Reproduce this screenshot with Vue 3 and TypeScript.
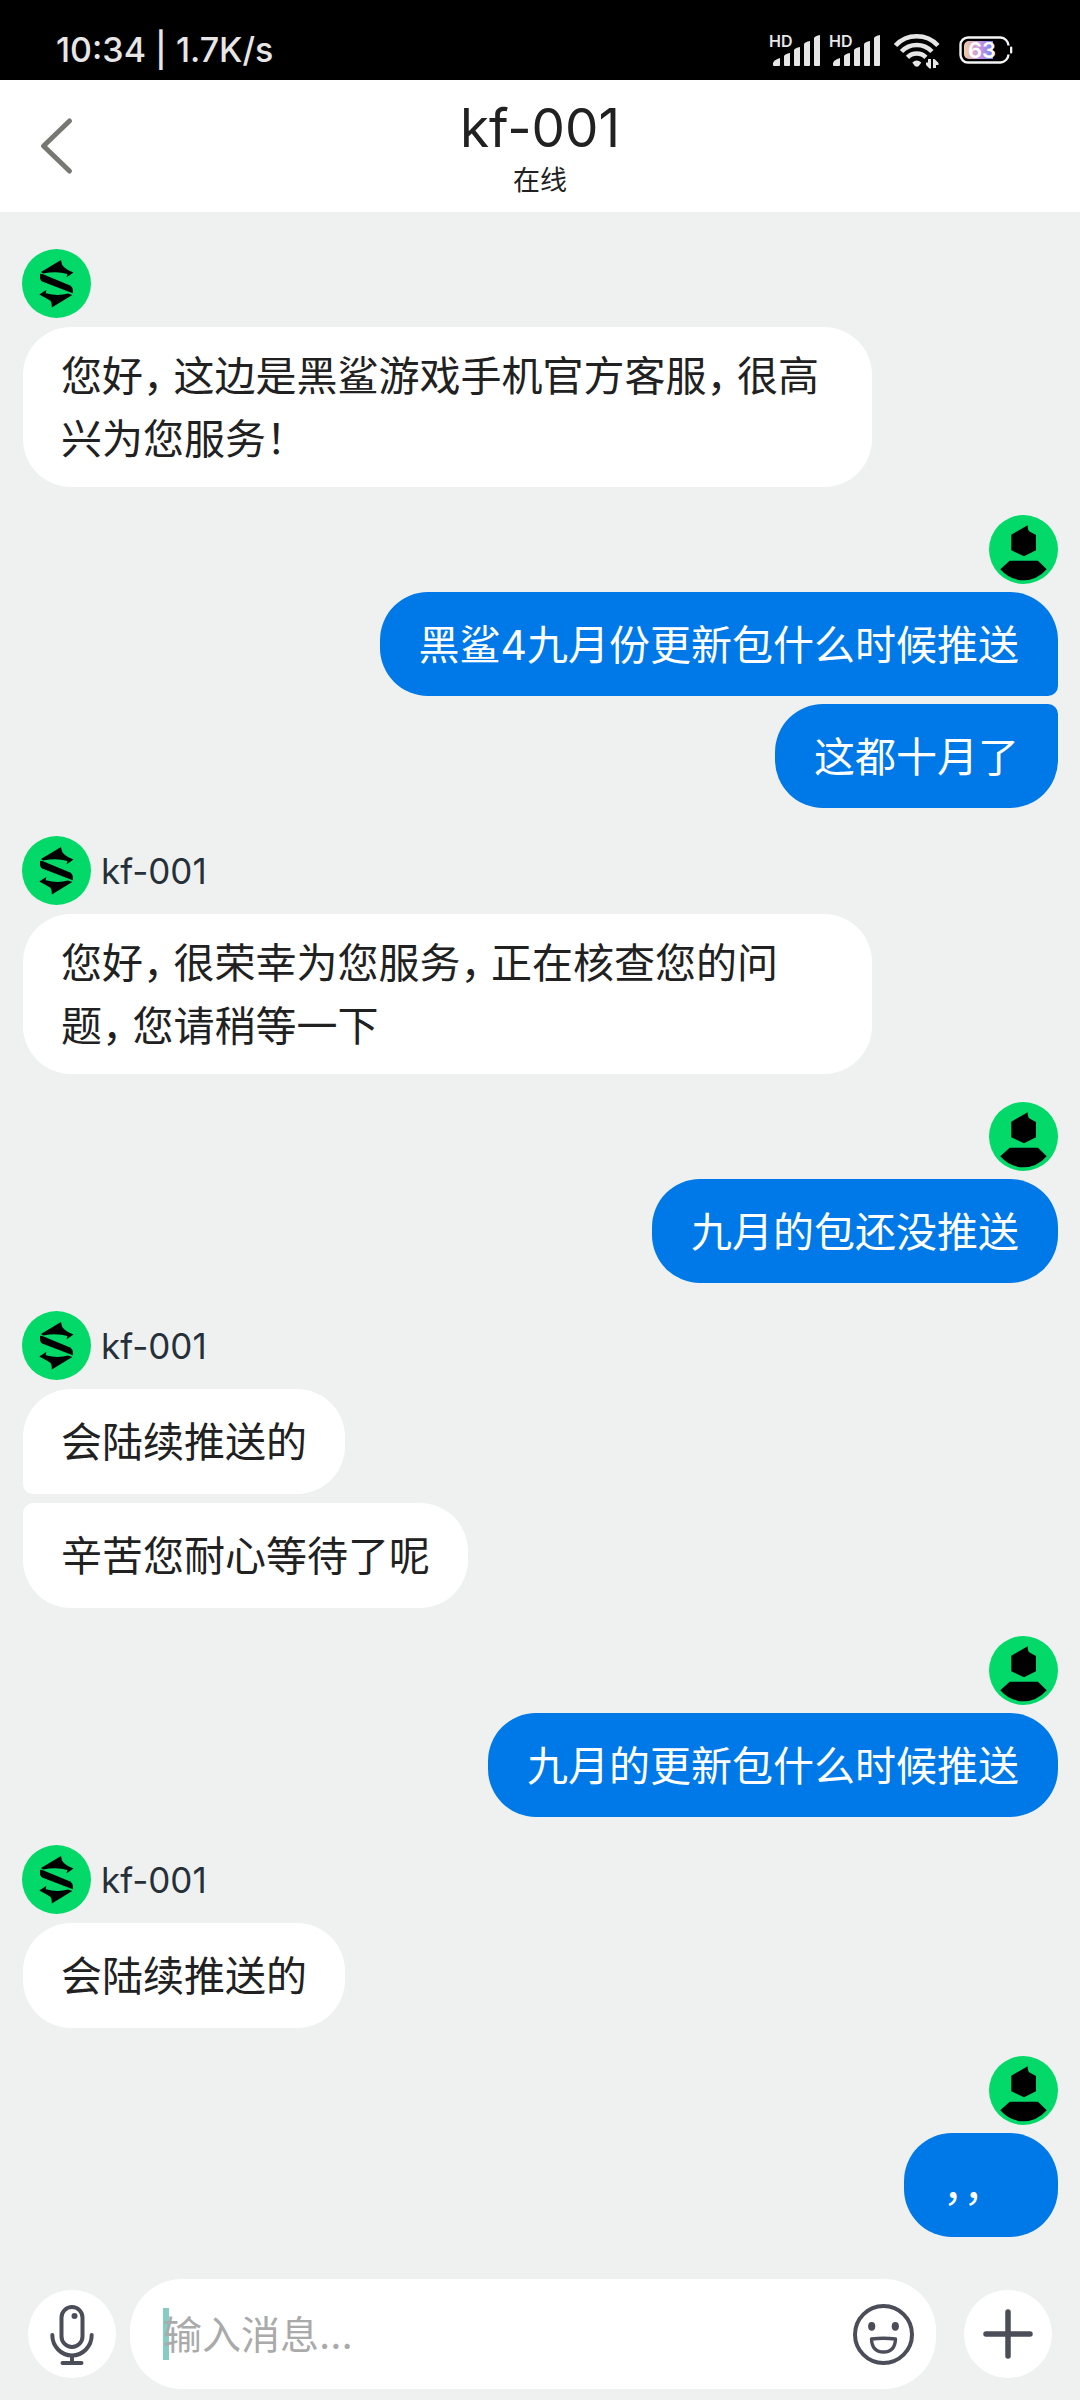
<script setup lang="ts">
import { ref } from 'vue'

interface Group {
  id: number
  from: 'agent' | 'me'
  name?: string
  messages: string[][]
}

const draft = ref('')

// Each message is a list of lines.
const groups: Group[] = [
  { id: 1, from: 'agent', messages: [['您好，这边是黑鲨游戏手机官方客服，很高', '兴为您服务！']] },
  { id: 2, from: 'me', messages: [['黑鲨4九月份更新包什么时候推送'], ['这都十月了']] },
  { id: 3, from: 'agent', name: 'kf-001', messages: [['您好，很荣幸为您服务，正在核查您的问', '题，您请稍等一下']] },
  { id: 4, from: 'me', messages: [['九月的包还没推送']] },
  { id: 5, from: 'agent', name: 'kf-001', messages: [['会陆续推送的'], ['辛苦您耐心等待了呢']] },
  { id: 6, from: 'me', messages: [['九月的更新包什么时候推送']] },
  { id: 7, from: 'agent', name: 'kf-001', messages: [['会陆续推送的']] },
  { id: 8, from: 'me', messages: [['，，']] },
]

// Splits a line so that each comma can be set half-width.
const parts = (line: string): string[] => line.split(/(，)/).filter((p) => p !== '')
</script>

<template>
  <div class="app">
    <div class="status">
      <span class="status-text">10:34 | 1.7K/s</span>
      <div class="status-icons">
        <svg v-for="n in 2" :key="n" class="signal" width="50" height="34" viewBox="0 0 50 34" aria-hidden="true">
          <text class="hd" x="-2" y="14">HD</text>
          <g fill="#e6e6e6">
            <path d="M2 30q1-3 7-5v7a1 1 0 0 1-1 1H3a1 1 0 0 1-1-1z" />
            <path d="M13 23q1-2 6-3v12a1 1 0 0 1-1 1h-4a1 1 0 0 1-1-1z" />
            <path d="M23 17q1-2 6-3v18a1 1 0 0 1-1 1h-4a1 1 0 0 1-1-1z" />
            <path d="M33 11q1-2 6-3v24a1 1 0 0 1-1 1h-4a1 1 0 0 1-1-1z" />
            <path d="M43 5q1-2 6-3v30a1 1 0 0 1-1 1h-4a1 1 0 0 1-1-1z" />
          </g>
        </svg>
        <svg class="wifi" width="50" height="38" viewBox="0 0 50 38" aria-hidden="true">
          <g fill="none" stroke="#e6e6e6" stroke-width="4.600">
            <path d="M4.500 14.500a29 29 0 0 1 42.400 0" />
            <path d="M10.500 20.500a21 21 0 0 1 30.400 0" />
            <path d="M16.500 26.300a13 13 0 0 1 18.400 0" />
          </g>
          <path d="M21.300 31.500q4.400-4 9 0l-2.500 3.500q-2 1.600-4 0z" fill="#e6e6e6" />
          <path d="M37 28h3v9.500h-1.500l-3.500-3.500v-2.500h2zM42 37V28h1.500l4 4v2h-2.500v3z" fill="#e6e6e6" />
        </svg>
        <svg class="battery" width="54" height="28" viewBox="0 0 54 28" role="img" aria-label="63%">
          <defs>
            <linearGradient id="charge" x1="0" x2="1" y1="0" y2="0">
              <stop offset="0" stop-color="#efd0a0" />
              <stop offset="0.350" stop-color="#dba5d0" />
              <stop offset="0.650" stop-color="#b98fe8" />
              <stop offset="1" stop-color="#6f86f2" />
            </linearGradient>
          </defs>
          <path d="M49.500 9.500A8.500 8.500 0 0 0 41.500 1.500H9A7.500 7.500 0 0 0 1.500 9v10A7.500 7.500 0 0 0 9 26.500h32.500A8.500 8.500 0 0 0 49.500 18.500" fill="none" stroke="#f4f4f4" stroke-width="2.400" />
          <rect x="51" y="10.500" width="2.300" height="7" rx="1" fill="#f4f4f4" />
          <path d="M10 5h24v18H10a5 5 0 0 1-5-5v-8a5 5 0 0 1 5-5z" fill="url(#charge)" />
          <text class="percent" x="23" y="22" text-anchor="middle">63</text>
        </svg>
      </div>
    </div>

    <header class="header">
      <button class="back" type="button" aria-label="返回">
        <svg width="33" height="58" viewBox="0 0 33 58" aria-hidden="true">
          <path d="M29.500 4L3.500 29l26 25" fill="none" stroke="#777872" stroke-width="5" stroke-linecap="round" stroke-linejoin="round" />
        </svg>
      </button>
      <div class="heading">
        <h1 class="title">kf-001</h1>
        <p class="presence">在线</p>
      </div>
    </header>

    <main class="chat">
      <section v-for="group in groups" :key="group.id" class="group" :class="group.from">
        <div class="sender">
          <svg class="avatar" viewBox="0 0 69 69" aria-hidden="true">
            <circle cx="34.500" cy="34.500" r="34.500" fill="#02d968" />
            <g v-if="group.from === 'agent'">
              <path d="M19 23L39 11Q39.500 15 41 17Q44 20.500 51.500 23.500L48 26L44.500 28.300L45.500 25Q35 22 21 24.500z" />
              <path d="M18 24.700L21 25.200L47.500 36.300Q50.800 38 50.800 41V44.300L21.500 33Q18 31.500 18 28.500z" />
              <path d="M17.300 45.500L24.300 41L23.700 44.300Q36 47.500 46 44.500L50.300 46L29.800 58.500Q30 53 28 51.500Q24 49 17.300 45.500z" />
            </g>
            <g v-else>
              <path d="M22.300 19.700L38.700 10.300Q38.500 15.500 41 16.700L47 20V35.300L35 41.300L22.300 35.300z" />
              <path d="M20.700 45.700H49L57.700 54.300Q48 65.300 34.500 65.300T11.300 54.300z" />
            </g>
          </svg>
          <span v-if="group.name" class="name">{{ group.name }}</span>
        </div>
        <div class="bubbles">
          <p v-for="(lines, i) in group.messages" :key="i" class="bubble" :class="{ long: lines.length > 1 }">
            <span v-for="(line, j) in lines" :key="j" class="line"><template v-for="(part, k) in parts(line)" :key="k"><span v-if="part === '，'" class="comma">，</span><template v-else>{{ part }}</template></template></span>
          </p>
        </div>
      </section>
    </main>

    <form class="composer" @submit.prevent>
      <button class="round" type="button" aria-label="语音">
        <svg width="88" height="88" viewBox="0 0 88 88" fill="none" stroke="#4b4e59" stroke-width="4" stroke-linecap="round" aria-hidden="true">
          <rect x="33.500" y="17" width="21" height="40" rx="10.500" />
          <circle cx="46.500" cy="26" r="3" fill="#4b4e59" stroke="none" />
          <path d="M24.300 45a19.700 20.500 0 0 0 39.400 0M44 66v7M34.500 73h19" />
        </svg>
      </button>
      <div class="field">
        <span class="caret"></span>
        <input v-model="draft" class="input" type="text" placeholder="输入消息..." aria-label="输入消息" />
        <button class="emoji" type="button" aria-label="表情">
          <svg width="61" height="61" viewBox="0 0 61 61" fill="none" stroke="#4b4e59" stroke-width="4" aria-hidden="true">
            <circle cx="30.500" cy="30.500" r="28.500" />
            <g fill="#4b4e59" stroke="none">
              <ellipse cx="18.700" cy="22.300" rx="3.600" ry="4.400" />
              <ellipse cx="42.300" cy="22.300" rx="3.600" ry="4.400" />
            </g>
            <path d="M18.500 35Q30.500 33.500 42.500 35Q42 48 30.500 48T18.500 35z" stroke-width="3.400" stroke-linejoin="round" />
          </svg>
        </button>
      </div>
      <button class="round more" type="button" aria-label="更多">
        <svg width="88" height="88" viewBox="0 0 88 88" fill="none" stroke="#4b4e59" stroke-width="5.500" stroke-linecap="round" aria-hidden="true">
          <path d="M44 22v44M22 44h44" />
        </svg>
      </button>
    </form>
  </div>
</template>

<style>
body {
  background: #eff1f1;
}
</style>

<style scoped>
.app {
  display: flex;
  flex-direction: column;
  min-height: 100vh;
  background: #eff1f1;
  color: #212121;
  font-family: Inter, "Noto Sans CJK SC", sans-serif;
}

h1,
p {
  margin: 0;
  font-weight: 400;
}

button {
  padding: 0;
  border: 0;
  background: none;
}

svg {
  display: block;
  overflow: visible;
}

.status {
  display: flex;
  align-items: flex-end;
  justify-content: space-between;
  box-sizing: border-box;
  height: 80px;
  padding: 0 67px 10px 56px;
  background: #000;
}

.status-text {
  color: #e6e6e6;
  font-size: 34px;
  font-weight: 500;
  line-height: 40px;
}

.status-icons {
  display: flex;
  align-items: center;
  height: 40px;
}

.signal {
  margin-right: 10px;
}

.hd {
  fill: #e6e6e6;
  font-size: 16px;
  font-weight: 600;
}

.wifi {
  margin-right: 18px;
}

.percent {
  fill: #fff;
  font-size: 22px;
  font-weight: 600;
}

.header {
  display: grid;
  grid-template-columns: 1fr auto 1fr;
  align-items: center;
  height: 132px;
  padding: 0 40px;
  background: #fff;
}

.back {
  justify-self: start;
}

.heading {
  padding-top: 6px;
  text-align: center;
}

.title {
  font-size: 53px;
  line-height: 64px;
}

.presence {
  font-size: 27px;
  line-height: 42px;
}

.chat {
  display: flex;
  flex: 1;
  flex-direction: column;
  gap: 28px;
  padding: 37px 22px 42px;
}

.group {
  display: flex;
  flex-direction: column;
  gap: 9px;
}

.group.me {
  gap: 8px;
}

.sender {
  display: flex;
  align-items: center;
  gap: 10px;
}

.me .sender {
  justify-content: flex-end;
}

.avatar {
  width: 69px;
  height: 69px;
}

.name {
  color: #263038;
  font-size: 35px;
  line-height: 40px;
}

.bubbles {
  display: flex;
  flex-direction: column;
  align-items: flex-start;
  gap: inherit;
}

.agent .bubbles {
  padding-left: 1px;
}

.me .bubbles {
  align-items: flex-end;
}

.bubble {
  display: flex;
  flex-direction: column;
  justify-content: center;
  box-sizing: border-box;
  min-width: 154px;
  max-width: 82%;
  min-height: 105px;
  padding: 18px 38px 16px;
  border-radius: 48px;
  background: #fff;
  font-size: 41px;
  line-height: 63px;
}

.bubble.long {
  width: 82%;
}

.me .bubble {
  min-height: 104px;
  padding-right: 39px;
  padding-left: 39px;
  background: #0079e8;
  color: #fff;
}

.agent .bubble:not(:last-child) {
  border-bottom-left-radius: 10px;
}

.agent .bubble:not(:first-child) {
  border-top-left-radius: 10px;
}

.me .bubble:not(:last-child) {
  border-bottom-right-radius: 10px;
}

.me .bubble:not(:first-child) {
  border-top-right-radius: 10px;
}

.line {
  display: block;
}

.comma {
  font-feature-settings: "halt";
}

.agent .comma {
  margin-right: 10px;
}

.composer {
  display: flex;
  align-items: center;
  padding: 0 28px 11px;
}

.round {
  flex: none;
  width: 88px;
  height: 88px;
  border-radius: 50%;
  background: #fff;
}

.more {
  margin-left: 28px;
}

.field {
  position: relative;
  display: flex;
  flex: 1;
  align-items: center;
  min-width: 0;
  height: 110px;
  margin-left: 14px;
  padding: 0 22px 0 33px;
  box-sizing: border-box;
  border-radius: 52px;
  background: #fff;
}

.caret {
  position: absolute;
  top: 29px;
  left: 33px;
  width: 6px;
  height: 52px;
  background: #84ccc4;
}

.input {
  position: relative;
  flex: 1;
  min-width: 0;
  height: 60px;
  padding: 0;
  border: 0;
  outline: 0;
  background: transparent;
  color: #212121;
  font-family: inherit;
  font-size: 39px;
}

.input::placeholder {
  color: #aaa;
  opacity: 1;
}
</style>
